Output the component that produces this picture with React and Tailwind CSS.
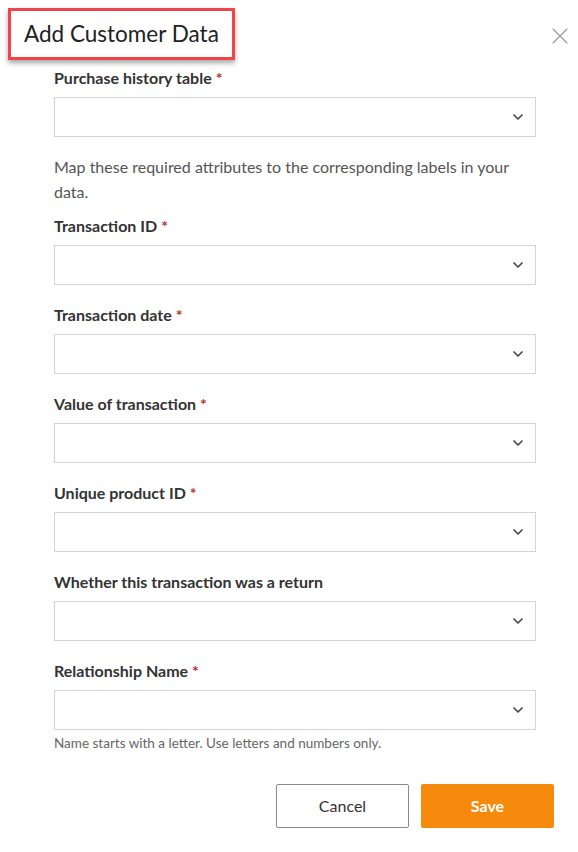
import { ChevronDown, X } from "lucide-react";

const fields = [
  { label: "Transaction ID", required: true },
  { label: "Transaction date", required: true },
  { label: "Value of transaction", required: true },
  { label: "Unique product ID", required: true },
  { label: "Whether this transaction was a return", required: false },
];

function Field({ label, required }) {
  return (
    <div>
      <label className="block text-[16px] leading-[20px] font-bold text-[#333]">
        {label}
        {required && <span className="text-[#b8322c] ml-1">*</span>}
      </label>
      <div className="mt-[9px] h-[40px] border border-[#d3d3d8] bg-white flex items-center justify-end pr-[9px]">
        <ChevronDown size={16} strokeWidth={2.5} className="text-[#444]" />
      </div>
    </div>
  );
}

export default function App() {
  return (
    <div
      className="relative w-[578px] h-[852px] bg-white overflow-hidden"
      style={{ fontFamily: "Lato, 'Noto Sans', sans-serif" }}
    >
      <button className="absolute top-[22px] right-[4px] text-[#9a9a9a]">
        <X size={28} strokeWidth={1} />
      </button>

      <div className="pt-[8px] pl-[8px]">
        <div className="w-[227px] h-[52px] border-[3px] border-[#f0434a] shadow-[0_3px_5px_rgba(0,0,0,0.35)] flex items-center pl-[13px]">
          <h1 className="text-[22.5px] leading-none text-[#222] font-normal">Add Customer Data</h1>
        </div>
      </div>

      <div className="pl-[54px] pr-[42px] mt-[8px]">
        <Field label="Purchase history table" required />

        <p className="mt-[17px] text-[16px] leading-[25px] text-[#555]">
          Map these required attributes to the corresponding labels in your data.
        </p>

        <div className="mt-[12px] flex flex-col gap-[20px]">
          {fields.map((f) => (
            <Field key={f.label} label={f.label} required={f.required} />
          ))}
          <div>
            <Field label="Relationship Name" required />
            <p className="mt-[4px] text-[13.5px] leading-[18px] text-[#666]">
              Name starts with a letter. Use letters and numbers only.
            </p>
          </div>
        </div>
      </div>

      <div className="flex justify-end gap-[12px] pr-[24px] mt-[32px]">
        <button className="w-[133px] h-[44px] border border-[#8a8a8a] rounded-[2px] text-[16px] text-[#333] bg-white">
          Cancel
        </button>
        <button className="w-[133px] h-[44px] rounded-[2px] text-[16px] font-bold text-white bg-[#f68a0c]">
          Save
        </button>
      </div>
    </div>
  );
}
